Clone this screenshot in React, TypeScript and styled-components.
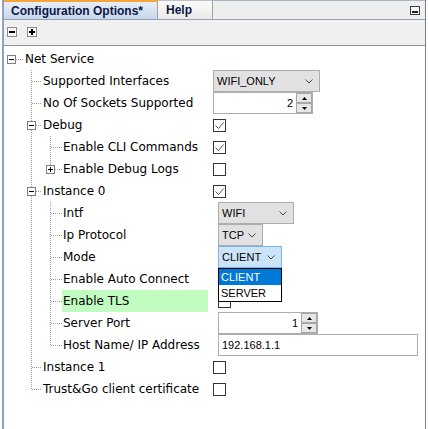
import styled, { createGlobalStyle } from 'styled-components';

const GlobalStyle = createGlobalStyle`
  html, body {
    margin: 0;
    padding: 0;
    background: #ffffff;
  }
  body {
    font-family: 'DejaVu Sans', Verdana, sans-serif;
  }
  * {
    box-sizing: border-box;
  }
`;

const Frame = styled.div`
  width: 424px;
  height: 429px;
  margin-left: 2px;
  border-left: 2px solid #8fa3bb;
  border-right: 1px solid #7f7f7f;
  display: flex;
  flex-direction: column;
  background: #ffffff;
  overflow: hidden;
`;

const TabStrip = styled.div`
  display: flex;
  height: 20px;
  background: #eeeeee;
  border-bottom: 1px solid #8fa3bb;
`;

const Tab = styled.div<{ $active?: boolean; $width: number }>`
  width: ${(p) => p.$width}px;
  height: 19px;
  display: flex;
  align-items: center;
  padding-left: ${(p) => (p.$active ? 7 : 8)}px;
  font-family: 'Liberation Sans', Arial, sans-serif;
  font-weight: bold;
  font-size: 12px;
  color: #0b1846;
  background: ${(p) =>
    p.$active ? 'linear-gradient(#e8eef8, #c8d7ec)' : 'linear-gradient(#fbfbf8, #ebeae5)'};
  border-top: ${(p) => (p.$active ? '2px solid #f5a53c' : '1px solid #b9c2cc')};
  border-right: 1px solid #a3a3a3;
`;

const TabFiller = styled.div`
  flex: 1;
  display: flex;
  justify-content: flex-end;
  align-items: center;
  padding-right: 5px;
  border-top: 1px solid #a9b7c6;
`;

const Toolbar = styled.div`
  height: 26px;
  display: flex;
  align-items: flex-start;
  gap: 10px;
  padding: 7px 0 0 3px;
  background: #f0f0f0;
  border-bottom: 1px solid #8a949e;
`;

const ToolButton = styled.div`
  width: 10px;
  height: 10px;
  border: 1px solid #8c8c8c;
  background: #f8f8f8;
  display: flex;
`;

const Tree = styled.div`
  flex: 1;
  padding-top: 2px;
  background: #ffffff;
`;

const Row = styled.div`
  display: flex;
  align-items: center;
  height: 22px;
`;

const Label = styled.span<{ $width: number; $hl?: boolean }>`
  display: block;
  width: ${(p) => p.$width}px;
  margin-right: 10px;
  height: 22px;
  line-height: 22px;
  padding-left: 1px;
  font-size: 12px;
  color: #000000;
  white-space: nowrap;
  background: ${(p) => (p.$hl ? '#c1fdc1' : 'transparent')};
`;

const Slot = styled.div`
  position: relative;
  display: flex;
  align-items: center;
`;

const Select = styled.div<{ $width: number; $focused?: boolean }>`
  width: ${(p) => p.$width}px;
  height: 22px;
  display: flex;
  align-items: center;
  justify-content: space-between;
  padding: 0 6px 0 3px;
  border: 1px solid ${(p) => (p.$focused ? '#7eb4ea' : '#adadad')};
  background: ${(p) => (p.$focused ? '#cce4f7' : '#e1e1e1')};
  font-family: 'Liberation Sans', Arial, sans-serif;
  font-size: 11px;
  color: #000000;
`;

const DropList = styled.div`
  position: absolute;
  top: 22px;
  left: 0;
  width: 64px;
  border: 1px solid #000000;
  background: #ffffff;
  z-index: 2;
`;

const DropItem = styled.div<{ $selected?: boolean }>`
  height: 16px;
  line-height: 16px;
  padding-left: 2px;
  font-family: 'Liberation Sans', Arial, sans-serif;
  font-size: 11px;
  color: ${(p) => (p.$selected ? '#ffffff' : '#000000')};
  background: ${(p) => (p.$selected ? '#0078d7' : '#ffffff')};
`;

const Spinner = styled.div<{ $width: number }>`
  width: ${(p) => p.$width}px;
  height: 22px;
  display: flex;
  align-items: center;
  justify-content: flex-end;
  border: 1px solid #adadad;
  background: #ffffff;
  font-family: 'Liberation Sans', Arial, sans-serif;
  font-size: 11px;
  color: #000000;
`;

const SpinValue = styled.span`
  margin-right: 3px;
`;

const SpinColumn = styled.div`
  width: 16px;
  height: 20px;
  display: flex;
  flex-direction: column;
`;

const SpinButton = styled.div`
  height: 10px;
  display: flex;
  align-items: center;
  justify-content: center;
  border: 1px solid #a6a6a6;
  background: #e6e6e6;
`;

const TextBox = styled.div<{ $width: number }>`
  width: ${(p) => p.$width}px;
  height: 22px;
  display: flex;
  align-items: center;
  padding-left: 3px;
  border: 1px solid #adadad;
  background: #ffffff;
  font-family: 'Liberation Sans', Arial, sans-serif;
  font-size: 11px;
  color: #000000;
`;

const CheckBox = styled.div`
  width: 13px;
  height: 13px;
  border: 1px solid #333333;
  background: #ffffff;
  display: flex;
`;

type Control =
  | { kind: 'none' }
  | { kind: 'check'; checked: boolean }
  | { kind: 'select'; value: string; width: number; focused?: boolean; options?: string[] }
  | { kind: 'spinner'; value: string; width: number }
  | { kind: 'text'; value: string; width: number };

interface TreeNode {
  label: string;
  level: 0 | 1 | 2;
  box?: 'minus' | 'plus';
  last?: boolean;
  controlX: number;
  control: Control;
  highlight?: boolean;
}

const nodes: TreeNode[] = [
  { label: 'Net Service', level: 0, box: 'minus', controlX: 213, control: { kind: 'none' } },
  { label: 'Supported Interfaces', level: 1, controlX: 213, control: { kind: 'select', value: 'WIFI_ONLY', width: 107 } },
  { label: 'No Of Sockets Supported', level: 1, controlX: 213, control: { kind: 'spinner', value: '2', width: 100 } },
  { label: 'Debug', level: 1, box: 'minus', controlX: 213, control: { kind: 'check', checked: true } },
  { label: 'Enable CLI Commands', level: 2, controlX: 213, control: { kind: 'check', checked: true } },
  { label: 'Enable Debug Logs', level: 2, box: 'plus', last: true, controlX: 213, control: { kind: 'check', checked: false } },
  { label: 'Instance 0', level: 1, box: 'minus', controlX: 213, control: { kind: 'check', checked: true } },
  { label: 'Intf', level: 2, controlX: 218, control: { kind: 'select', value: 'WIFI', width: 76 } },
  { label: 'Ip Protocol', level: 2, controlX: 218, control: { kind: 'select', value: 'TCP', width: 45 } },
  {
    label: 'Mode',
    level: 2,
    controlX: 218,
    control: { kind: 'select', value: 'CLIENT', width: 64, focused: true, options: ['CLIENT', 'SERVER'] },
  },
  { label: 'Enable Auto Connect', level: 2, controlX: 218, control: { kind: 'check', checked: false } },
  { label: 'Enable TLS', level: 2, controlX: 218, highlight: true, control: { kind: 'check', checked: false } },
  { label: 'Server Port', level: 2, controlX: 218, control: { kind: 'spinner', value: '1', width: 100 } },
  { label: 'Host Name/ IP Address', level: 2, last: true, controlX: 218, control: { kind: 'text', value: '192.168.1.1', width: 200 } },
  { label: 'Instance 1', level: 1, controlX: 213, control: { kind: 'check', checked: false } },
  { label: 'Trust&Go client certificate', level: 1, last: true, controlX: 213, control: { kind: 'check', checked: false } },
];

// page x where each level's label starts (frame content starts at x=4)
const labelStart = [24, 42, 62];
const guideWidth = [20, 38, 58];
const lineColor = '#a0a0a0';
const mid = 11.5;

function ExpandBox({ left, kind }: { left: number; kind: 'minus' | 'plus' }) {
  return (
    <g>
      <rect x={left + 0.5} y={7.5} width={8} height={8} fill='#ffffff' stroke='#7f7f7f' />
      <line x1={left + 2} x2={left + 7} y1={mid} y2={mid} stroke='#000' />
      {kind === 'plus' && <line x1={left + 4.5} x2={left + 4.5} y1={9} y2={14} stroke='#000' />}
    </g>
  );
}

function Guides({ node }: { node: TreeNode }) {
  const w = guideWidth[node.level];
  const dash = '1 1';
  return (
    <svg width={w} height={22} style={{ flexShrink: 0, display: 'block' }}>
      {node.level === 0 && (
        <>
          <line x1={12} x2={20} y1={mid} y2={mid} stroke={lineColor} strokeDasharray={dash} />
          {node.box && <ExpandBox left={3} kind={node.box} />}
        </>
      )}
      {node.level === 1 && (
        <>
          <line x1={27.5} x2={27.5} y1={0} y2={node.last ? 12 : 22} stroke={lineColor} strokeDasharray={dash} />
          <line x1={node.box ? 32 : 28} x2={38} y1={mid} y2={mid} stroke={lineColor} strokeDasharray={dash} />
          {node.box && <ExpandBox left={23} kind={node.box} />}
        </>
      )}
      {node.level === 2 && (
        <>
          <line x1={27.5} x2={27.5} y1={0} y2={22} stroke={lineColor} strokeDasharray={dash} />
          <line x1={46.5} x2={46.5} y1={0} y2={node.last ? 12 : 22} stroke={lineColor} strokeDasharray={dash} />
          <line x1={node.box ? 51 : 47} x2={58} y1={mid} y2={mid} stroke={lineColor} strokeDasharray={dash} />
          {node.box && <ExpandBox left={42} kind={node.box} />}
        </>
      )}
    </svg>
  );
}

function Chevron() {
  return (
    <svg width={8} height={5} style={{ display: 'block' }}>
      <polyline points='0.5,0.5 4,4 7.5,0.5' fill='none' stroke='#4a4a4a' strokeWidth={1} />
    </svg>
  );
}

function Triangle({ up }: { up: boolean }) {
  return (
    <svg width={5} height={3} style={{ display: 'block' }}>
      <polygon points={up ? '2.5,0 5,3 0,3' : '0,0 5,0 2.5,3'} fill='#000' />
    </svg>
  );
}

function ControlView({ control }: { control: Control }) {
  switch (control.kind) {
    case 'none':
      return null;
    case 'check':
      return (
        <CheckBox>
          {control.checked && (
            <svg width={11} height={11}>
              <polyline points='1.5,5.5 4.5,8.5 9.5,2.5' fill='none' stroke='#555' strokeWidth={1} />
            </svg>
          )}
        </CheckBox>
      );
    case 'select':
      return (
        <>
          <Select $width={control.width} $focused={control.focused}>
            <span>{control.value}</span>
            <Chevron />
          </Select>
          {control.options && (
            <DropList>
              {control.options.map((o) => (
                <DropItem key={o} $selected={o === control.value}>
                  {o}
                </DropItem>
              ))}
            </DropList>
          )}
        </>
      );
    case 'spinner':
      return (
        <Spinner $width={control.width}>
          <SpinValue>{control.value}</SpinValue>
          <SpinColumn>
            <SpinButton>
              <Triangle up />
            </SpinButton>
            <SpinButton>
              <Triangle up={false} />
            </SpinButton>
          </SpinColumn>
        </Spinner>
      );
    case 'text':
      return <TextBox $width={control.width}>{control.value}</TextBox>;
  }
}

export default function App() {
  return (
    <>
      <GlobalStyle />
      <Frame>
        <TabStrip>
          <Tab $active $width={154}>
            Configuration Options*
          </Tab>
          <Tab $width={55}>Help</Tab>
          <TabFiller>
            <svg width={10} height={9} style={{ display: 'block' }}>
              <rect x={0.5} y={0.5} width={9} height={8} fill='#f4f4f4' stroke='#3c3c3c' />
              <rect x={2} y={5} width={6} height={2} fill='#222' />
            </svg>
          </TabFiller>
        </TabStrip>

        <Toolbar>
          <ToolButton>
            <svg width={8} height={8}>
              <line x1={1} x2={7} y1={4} y2={4} stroke='#000' strokeWidth={2} />
            </svg>
          </ToolButton>
          <ToolButton>
            <svg width={8} height={8}>
              <line x1={1} x2={7} y1={4} y2={4} stroke='#000' strokeWidth={2} />
              <line x1={4} x2={4} y1={1} y2={7} stroke='#000' strokeWidth={2} />
            </svg>
          </ToolButton>
        </Toolbar>

        <Tree>
          {nodes.map((n) => (
            <Row key={n.label}>
              <Guides node={n} />
              <Label $width={n.controlX - 10 - labelStart[n.level]} $hl={n.highlight}>
                {n.label}
              </Label>
              <Slot>
                <ControlView control={n.control} />
              </Slot>
            </Row>
          ))}
        </Tree>
      </Frame>
    </>
  );
}
